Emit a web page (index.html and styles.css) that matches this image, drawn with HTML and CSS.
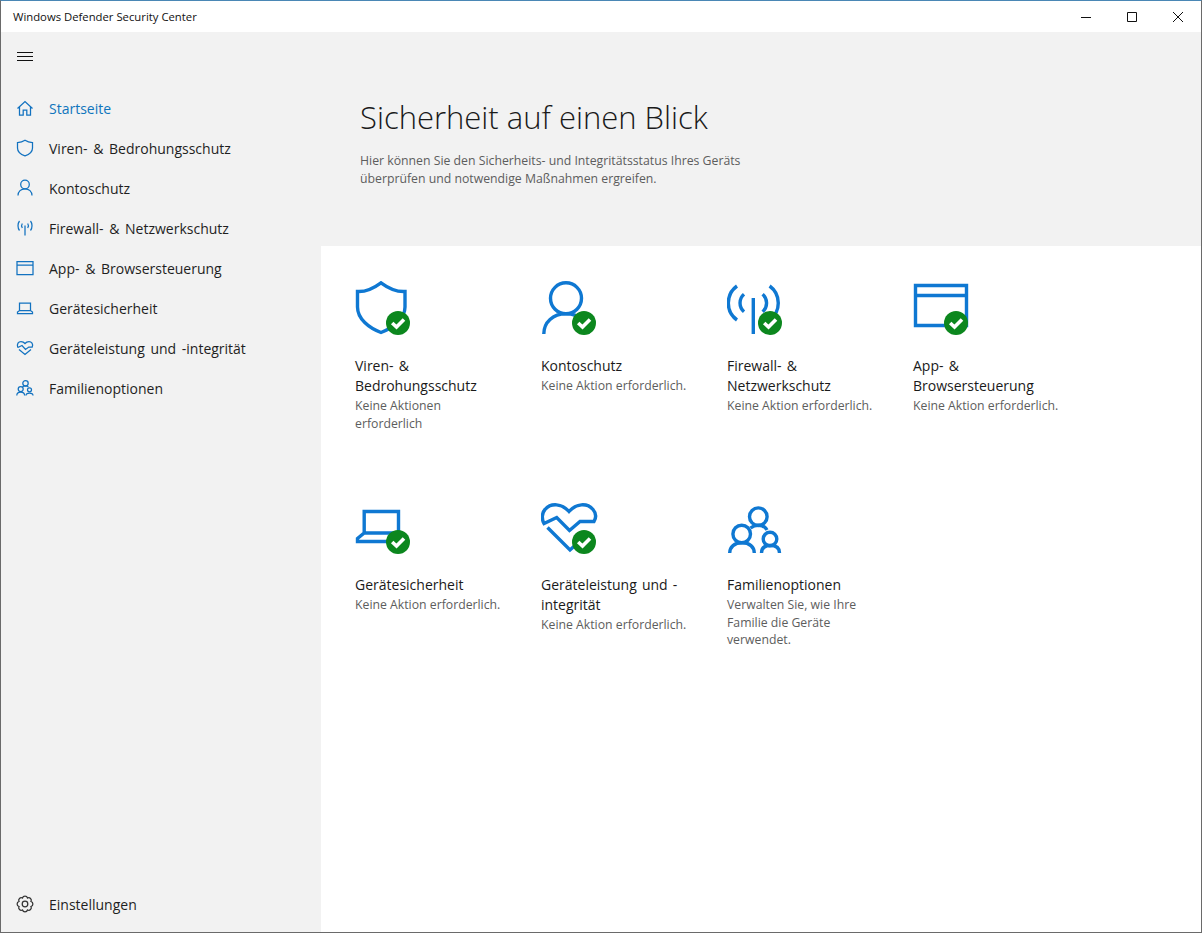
FILE: index.html
```html
<!DOCTYPE html>
<html lang="de">
<head>
<meta charset="utf-8">
<title>Windows Defender Security Center</title>
<link rel="stylesheet" href="styles.css">
</head>
<body>
<div class="window">
  <header class="titlebar">
    <span class="app-name">Windows Defender Security Center</span>
    <div class="controls">
      <button class="ctl"><svg width="12" height="12" viewBox="0 0 12 12"><path d="M1 6.5H11"/></svg></button>
      <button class="ctl"><svg width="12" height="12" viewBox="0 0 12 12"><path d="M1.5 1.5H10.5V10.5H1.5Z"/></svg></button>
      <button class="ctl"><svg width="12" height="12" viewBox="0 0 12 12"><path d="M1 1L11 11M11 1L1 11"/></svg></button>
    </div>
  </header>
  <div class="body">
    <nav class="sidebar">
      <div class="burger"><span></span><span></span><span></span></div>
      <ul class="nav">
        <li class="nav-item active"><svg class="nav-icon" viewBox="0 0 18 18"><path d="M1.5 9.5L9 2.5L16.5 9.5M3.5 8V16H7.2V11H10.8V16H14.5V8"/></svg>Startseite</li>
        <li class="nav-item"><svg class="nav-icon" viewBox="0 0 18 18"><path d="M1.5 3.5C4.5 3.5 7 2.7 9 1.3C11 2.7 13.5 3.5 16.5 3.5V9C16.5 12.5 13 15.5 9 16.8C5 15.5 1.5 12.5 1.5 9Z"/></svg>Viren- &amp; Bedrohungsschutz</li>
        <li class="nav-item"><svg class="nav-icon" viewBox="0 0 18 18"><circle cx="9" cy="5.5" r="4.3"/><path d="M2 16.5C2 12.5 5 9.8 9 9.8C13 9.8 16 12.5 16 16.5"/></svg>Kontoschutz</li>
        <li class="nav-item"><svg class="nav-icon" viewBox="0 0 18 18"><path d="M9 6.5V16.5M3.5 11.5C1.5 9 1.5 4.5 3.5 2M6.3 9C5.5 7.8 5.5 5.7 6.3 4.5M14.5 11.5C16.5 9 16.5 4.5 14.5 2M11.7 9C12.5 7.8 12.5 5.7 11.7 4.5"/></svg>Firewall- &amp; Netzwerkschutz</li>
        <li class="nav-item"><svg class="nav-icon" viewBox="0 0 18 18"><path d="M1 2.5H17V15.5H1ZM1 6H17"/></svg>App- &amp; Browsersteuerung</li>
        <li class="nav-item"><svg class="nav-icon" viewBox="0 0 18 18"><path d="M3.5 11.5V4H14.5V11.5M2 14.5H16.5V13L14.5 11.5H3.5L1.5 13V14.5Z"/></svg>Gerätesicherheit</li>
        <li class="nav-item"><svg class="nav-icon" viewBox="0 0 18 18"><path d="M1.8 8.5C0.5 5 2.5 2.5 5 2.5C6.5 2.5 8 3.2 9 4.5C10 3.2 11.5 2.5 13 2.5C15.5 2.5 17.5 5 16.2 8H12.8L9.5 10.5L6 6.5L1.8 8.5M3 10.5L9 15.5L15 10.5"/></svg>Geräteleistung und -integrität</li>
        <li class="nav-item"><svg class="nav-icon" viewBox="0 0 18 18"><circle cx="9.5" cy="4.3" r="2.7"/><circle cx="4.7" cy="10" r="2.5"/><circle cx="13.5" cy="10.8" r="2"/><path d="M0.8 16.5C0.8 14.5 2.5 13 4.7 13C6.9 13 8.6 14.5 8.6 16.5M10 16.5C10 15 11.5 14 13.5 14C15.5 14 17 15 17 16.5M6.5 8C7 7.2 8.2 6.8 9.5 6.8C10.8 6.8 12 7.2 12.5 8.2"/></svg>Familienoptionen</li>
      </ul>
      <div class="nav-item settings"><svg class="nav-icon" viewBox="0 0 18 18"><path d="M15 6.5A2.6 2.6 0 0 1 15 11.5A2.6 2.6 0 0 1 11.5 15A2.6 2.6 0 0 1 6.5 15A2.6 2.6 0 0 1 3 11.5A2.6 2.6 0 0 1 3 6.5A2.6 2.6 0 0 1 6.5 3A2.6 2.6 0 0 1 11.5 3A2.6 2.6 0 0 1 15 6.5Z"/><circle cx="9" cy="9" r="2.8"/></svg>Einstellungen</div>
    </nav>
    <main class="main">
      <section class="hero">
        <h1>Sicherheit auf einen Blick</h1>
        <p>Hier können Sie den Sicherheits- und Integritätsstatus Ihres Geräts<br>überprüfen und notwendige Maßnahmen ergreifen.</p>
      </section>
      <section class="tiles">
        <article class="tile">
          <svg class="tile-icon" viewBox="0 0 60 56"><path class="glyph" d="M2.5 10.5C11 11 19 7 26 1.8C33 7 41 11 50 10.5V26C50 38 38 47 26 51.5C14 47 2.5 38 2.5 26Z"/><circle class="badge" cx="43" cy="42" r="12"/><path class="tick" d="M37.2 42L41.5 46L49 38.5"/></svg>
          <h2>Viren- &amp; Bedrohungsschutz</h2>
          <p>Keine Aktionen erforderlich</p>
        </article>
        <article class="tile">
          <svg class="tile-icon" viewBox="0 0 60 56"><circle class="glyph" cx="25" cy="17.3" r="15.5"/><path class="glyph" d="M2.8 53C2.8 41 12 32.8 25 32.8C38 32.8 47 41 47 53"/><circle class="badge" cx="43" cy="42" r="12"/><path class="tick" d="M37.2 42L41.5 46L49 38.5"/></svg>
          <h2>Kontoschutz</h2>
          <p>Keine Aktion erforderlich.</p>
        </article>
        <article class="tile">
          <svg class="tile-icon" viewBox="0 0 60 56"><path class="glyph" d="M26.3 17V53M10 39A21 21 0 0 1 10 5M17 30.7A11.5 11.5 0 0 1 17 13.3M42.6 39A21 21 0 0 0 42.6 5M35.6 30.7A11.5 11.5 0 0 0 35.6 13.3"/><circle class="badge" cx="43" cy="42" r="12"/><path class="tick" d="M37.2 42L41.5 46L49 38.5"/></svg>
          <h2>Firewall- &amp; Netzwerkschutz</h2>
          <p>Keine Aktion erforderlich.</p>
        </article>
        <article class="tile">
          <svg class="tile-icon" viewBox="0 0 60 56"><path class="glyph" d="M2.5 4.5H53.5V44.5H2.5ZM2.5 14.5H53.5"/><circle class="badge" cx="43" cy="42" r="12"/><path class="tick" d="M37.2 42L41.5 46L49 38.5"/></svg>
          <h2>App- &amp; Browsersteuerung</h2>
          <p>Keine Aktion erforderlich.</p>
        </article>
        <article class="tile">
          <svg class="tile-icon" viewBox="0 0 60 56"><path class="glyph" d="M9.2 33V11.5H43.5V33H9.2L2.5 38.5V41.5H34"/><circle class="badge" cx="43" cy="42" r="12"/><path class="tick" d="M37.2 42L41.5 46L49 38.5"/></svg>
          <h2>Gerätesicherheit</h2>
          <p>Keine Aktion erforderlich.</p>
        </article>
        <article class="tile">
          <svg class="tile-icon" viewBox="0 0 60 56"><path class="glyph" d="M3 23.5C0.5 19 0.8 13 4 9.5C10 2.5 21 3.5 28 11.5C35 3.5 46 2.5 52 9.5C55.5 13.5 55 18 53 21.5H39L28.5 30.5L15.7 17.5L3 23.5ZM6.5 27.5L29 50L40 40"/><circle class="badge" cx="43" cy="42" r="12"/><path class="tick" d="M37.2 42L41.5 46L49 38.5"/></svg>
          <h2>Geräteleistung und -integrität</h2>
          <p>Keine Aktion erforderlich.</p>
        </article>
        <article class="tile">
          <svg class="tile-icon" viewBox="0 0 60 56"><circle class="glyph" cx="31.3" cy="16.7" r="8.8"/><circle class="glyph" cx="14.7" cy="34" r="8.8"/><circle class="glyph" cx="43" cy="39" r="6.8"/><path class="glyph" d="M2.7 53C2.7 47 7.5 42.7 15 42.7C22.5 42.7 27.3 47 27.3 53M34.5 53C34.5 48 38 45.5 43.5 45.5C49 45.5 52.5 48 52.5 53M23.5 28C26 26 28.5 25.2 31.5 25.2C35 25.2 38 26.5 40 30"/></svg>
          <h2>Familienoptionen</h2>
          <p>Verwalten Sie, wie Ihre Familie die Geräte verwendet.</p>
        </article>
      </section>
    </main>
  </div>
</div>
</body>
</html>
```

FILE: styles.css
```css
* { box-sizing: border-box; }
html, body { margin: 0; padding: 0; height: 100%; }
body { font-family: "Open Sans", "Noto Sans", "Liberation Sans", sans-serif; color: #1a1a1a; background: #fff; overflow: hidden; }
.window { height: 933px; display: flex; flex-direction: column; border: 1px solid #6a6a6a; border-top-color: #4a87b5; }
.titlebar { height: 31px; flex: none; display: flex; align-items: center; justify-content: space-between; background: #fff; }
.app-name { font-size: 11.3px; padding: 0 0 1px 12px; color: #111; }
.controls { display: flex; }
.ctl { width: 46px; height: 31px; border: 0; background: none; padding: 0; display: flex; align-items: center; justify-content: center; }
.ctl svg { fill: none; stroke: #111; stroke-width: 1; }
.body { flex: 1; display: flex; min-height: 0; }
.sidebar { width: 320px; flex: none; background: #f2f2f2; display: flex; flex-direction: column; }
.burger { display: flex; flex-direction: column; gap: 3px; padding: 20px 0 0 16px; height: 56px; }
.burger span { display: block; width: 16px; height: 1px; background: #111; }
.nav { list-style: none; margin: 0; padding: 0; flex: 1; }
.nav-item { height: 40px; display: flex; align-items: center; font-size: 14px; word-spacing: 2px; color: #1f1f1f; }
.nav-icon { width: 18px; height: 18px; margin: 0 15px 0 15px; flex: none; fill: none; stroke: #1272c0; stroke-width: 1.25; }
.active { color: #0f75bd; }
.settings { margin-bottom: 8px; }
.settings .nav-icon { stroke: #333; }
.main { flex: 1; display: flex; flex-direction: column; background: #fff; }
.hero { height: 214px; flex: none; background: #f2f2f2; padding: 61px 0 0 39px; }
.hero h1 { margin: 0; font-size: 31px; font-weight: 300; line-height: 48px; color: #1a1a1a; }
.hero p { margin: 11px 0 0; font-size: 12.28px; line-height: 18px; color: #5d5d5d; }
.tiles { display: grid; grid-template-columns: repeat(4, 186px); grid-auto-rows: 219px; padding: 35px 0 0 34px; }
.tile { padding-right: 34px; }
.tile-icon { display: block; width: 60px; height: 56px; fill: none; }
.glyph { fill: none; stroke: #0f78d2; stroke-width: 3.4; }
.badge { fill: #0c871e; }
.tick { fill: none; stroke: #fff; stroke-width: 3.6; }
.tile h2 { margin: 19px 0 0; font-size: 14px; font-weight: 400; line-height: 20px; word-spacing: 1.5px; color: #1a1a1a; }
.tile p { margin: 1px 0 0; font-size: 12.25px; line-height: 17.6px; color: #5d5d5d; }
```
